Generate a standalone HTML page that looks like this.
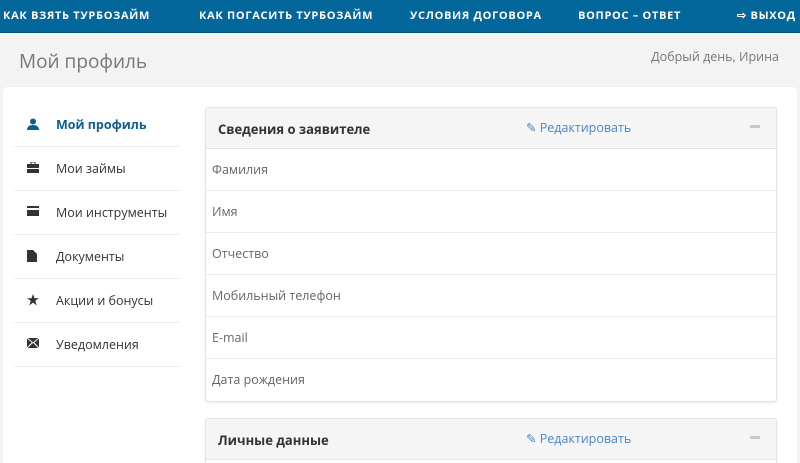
<!DOCTYPE html>
<html><head><meta charset="utf-8"><style>
*{margin:0;padding:0;box-sizing:border-box}
html,body{width:800px;height:463px;overflow:hidden}
body{background:#f3f3f3;font-family:"Open Sans","Liberation Sans",sans-serif;position:relative}
.nav{position:absolute;left:0;top:0;width:800px;height:33px;background:#03679b;border-bottom:1px solid #02507a}
.nav span{position:absolute;top:8px;color:#fff;font-weight:bold;font-size:11px;letter-spacing:0.7px;white-space:nowrap}
h1{position:absolute;left:19px;top:48px;font-size:19px;font-weight:normal;color:#777}
.greet{position:absolute;right:21px;top:48px;font-size:12.5px;color:#777}
.card{position:absolute;left:3px;top:87px;width:794px;height:380px;background:#fff;border-radius:5px}
.side{position:absolute;left:14px;width:166px;height:44px;border-bottom:1px solid #eee;font-size:12.5px;color:#333}
.side .t{position:absolute;left:42px;top:13px}
.side svg{position:absolute;left:13px;top:15px}
.panel{position:absolute;left:205px;width:572px;border:1px solid #e3e3e3;border-radius:3px;background:#fff;box-shadow:0 1px 2px rgba(0,0,0,.08);overflow:hidden}
.ph{height:41px;background:#f5f5f5;border-bottom:1px solid #e3e3e3;position:relative;font-size:13px;color:#333}
.ph .t{position:absolute;left:12px;top:12px;font-weight:bold}
.ph .e{position:absolute;left:320px;top:11px;color:#4a86c8;font-size:12.5px}
.ph .m{position:absolute;right:16px;top:17px;width:10px;height:3px;background:#c8c8c8}
.row{height:42px;border-bottom:1px solid #eaeaea;font-size:12.5px;color:#666;padding:12px 0 0 6px}
.row:last-child{border-bottom:none}
</style></head><body>
<div class="nav">
<span style="left:3px">КАК ВЗЯТЬ ТУРБОЗАЙМ</span>
<span style="left:199px">КАК ПОГАСИТЬ ТУРБОЗАЙМ</span>
<span style="left:410px">УСЛОВИЯ ДОГОВОРА</span>
<span style="left:578px">ВОПРОС – ОТВЕТ</span>
<span style="left:737px">⇨ ВЫХОД</span>
</div>
<h1>Мой профиль</h1>
<div class="greet">Добрый день, Ирина</div>
<div class="card"></div>
<div class="side" style="top:103px;color:#0d5f8f;font-weight:bold"><svg width="12" height="12" viewBox="0 0 12 12"><circle cx="6" cy="3.5" r="3" fill="#0d5f8f"/><path d="M0 12 Q0 7 6 7 Q12 7 12 12Z" fill="#0d5f8f"/></svg><span class="t">Мой профиль</span></div>
<div class="side" style="top:147px"><svg width="12" height="11"><rect x="4" y="0" width="4" height="3" fill="none" stroke="#333"/><rect y="2" width="12" height="9" fill="#333"/><rect y="6" width="12" height="1" fill="#fff"/></svg><span class="t">Мои займы</span></div>
<div class="side" style="top:191px"><svg width="12" height="10"><rect width="12" height="10" fill="#333"/><rect y="2" width="12" height="2" fill="#fff"/></svg><span class="t">Мои инструменты</span></div>
<div class="side" style="top:235px"><svg width="10" height="12"><path d="M0 0H6L10 4V12H0Z" fill="#333"/></svg><span class="t">Документы</span></div>
<div class="side" style="top:279px"><svg width="12" height="12" viewBox="0 0 12 12"><path d="M6 0L7.5 4.2H12L8.3 6.8L9.7 11.5L6 8.6L2.3 11.5L3.7 6.8L0 4.2H4.5Z" fill="#333"/></svg><span class="t">Акции и бонусы</span></div>
<div class="side" style="top:323px"><svg width="12" height="10"><rect width="12" height="10" fill="#333"/><path d="M0 0L6 5L12 0M0 10L5 5M12 10L7 5" stroke="#fff" fill="none"/></svg><span class="t">Уведомления</span></div>
<div class="panel" style="top:107px;height:295px">
<div class="ph"><span class="t">Сведения о заявителе</span><span class="e">✎ Редактировать</span><span class="m"></span></div>
<div class="row">Фамилия</div><div class="row">Имя</div><div class="row">Отчество</div><div class="row">Мобильный телефон</div><div class="row">E-mail</div><div class="row">Дата рождения</div>
</div>
<div class="panel" style="top:418px;height:50px">
<div class="ph"><span class="t">Личные данные</span><span class="e">✎ Редактировать</span><span class="m"></span></div>
</div>
</body></html>
